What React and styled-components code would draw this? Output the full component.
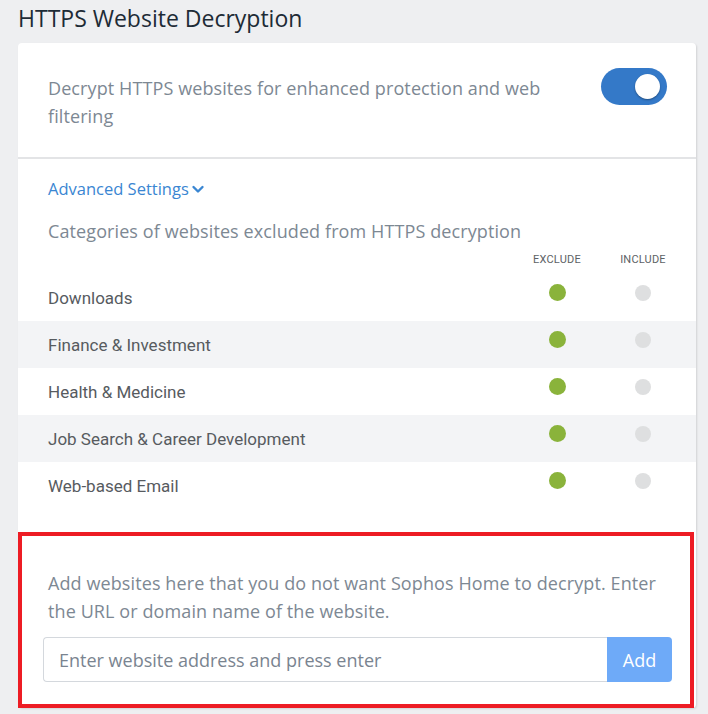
import React from 'react';
import styled, { createGlobalStyle } from 'styled-components';

const GlobalStyle = createGlobalStyle`
  body {
    margin: 0;
    background: #eeeff1;
    font-family: "Open Sans", "Noto Sans", sans-serif;
  }
`;

const Page = styled.div`
  padding: 4px 12px 0 18px;
  height: 714px;
  box-sizing: border-box;
  overflow: hidden;
`;

const Title = styled.h2`
  margin: 0 0 11px;
  font-size: 23px;
  line-height: 28px;
  font-weight: 400;
  color: #1d2b36;
`;

const Card = styled.div`
  background: #fff;
  border-radius: 4px;
  box-shadow: 1px 1px 2px rgba(0, 0, 0, 0.12);
`;

const ToggleSection = styled.div`
  display: flex;
  align-items: flex-start;
  justify-content: space-between;
  gap: 40px;
  height: 116px;
  box-sizing: border-box;
  padding: 31px 29px 0 30px;
  border-bottom: 2px solid #e3e4e6;
`;

const Lead = styled.p`
  margin: 0;
  font-size: 18px;
  letter-spacing: 0.1px;
  line-height: 28px;
  color: #7d8893;
`;

const Toggle = styled.div`
  flex: none;
  margin-top: -6px;
  width: 66px;
  height: 37px;
  border-radius: 19px;
  background: ${({ on }) => (on ? '#3479c8' : '#ccc')};
  display: flex;
  align-items: center;
  justify-content: ${({ on }) => (on ? 'flex-end' : 'flex-start')};
  padding: 0 7px;
  box-sizing: border-box;
`;

const Knob = styled.span`
  width: 25px;
  height: 25px;
  border-radius: 50%;
  background: #fff;
  box-shadow: 0 1px 2px rgba(0, 0, 0, 0.35);
`;

const Advanced = styled.div`
  padding: 19px 30px 0;
`;

const AdvancedLink = styled.a`
  display: inline-flex;
  align-items: center;
  gap: 2px;
  font-size: 16.5px;
  line-height: 22px;
  color: #3a86d2;
  text-decoration: none;
`;

const SubLead = styled(Lead)`
  margin-top: 20px;
  line-height: 22px;
`;

const Grid = styled.div`
  display: grid;
  grid-template-columns: 1fr 86px 86px;
  align-items: center;
  padding: 0 10px 0 30px;
  height: ${({ h }) => h}px;
  background: ${({ shaded }) => (shaded ? '#f3f4f6' : '#fff')};
`;

const Header = styled(Grid)`
  margin-top: 2px;
`;

const ColLabel = styled.span`
  font-family: "Roboto", sans-serif;
  font-size: 11px;
  letter-spacing: 0.2px;
  color: #5d6266;
  text-align: center;
`;

const RowLabel = styled.span`
  font-family: "Roboto", sans-serif;
  font-size: 17px;
  color: #575b5f;
`;

const Dot = styled.span`
  justify-self: center;
  width: ${({ on }) => (on ? 17 : 16)}px;
  height: ${({ on }) => (on ? 17 : 16)}px;
  margin-bottom: 10px;
  border-radius: 50%;
  background: ${({ on }) => (on ? '#8ab33b' : '#dedfe0')};
`;

const AddSection = styled.div`
  margin: 23px 2px 0 0;
  border: 4px solid #ed1c24;
  padding: 33px 18px 22px 21px;
`;

const AddText = styled(Lead)`
  padding-left: 5px;
  margin-bottom: 12px;
`;

const InputRow = styled.div`
  display: flex;
  height: 45px;
`;

const Input = styled.input`
  flex: 1;
  border: 1px solid #d4d8dd;
  border-right: none;
  border-radius: 4px 0 0 4px;
  padding: 0 15px;
  font-family: inherit;
  font-size: 18px;
  color: #333;
  outline: none;
  &::placeholder {
    color: #7a8490;
  }
`;

const AddButton = styled.button`
  width: 65px;
  border: none;
  border-radius: 0 4px 4px 0;
  background: #6eaaf8;
  color: #fff;
  font-family: inherit;
  font-size: 18px;
`;

const categories = [
  'Downloads',
  'Finance & Investment',
  'Health & Medicine',
  'Job Search & Career Development',
  'Web-based Email',
];

function Chevron() {
  return (
    <svg width="14" height="14" viewBox="0 0 14 14" fill="none">
      <path d="M2.5 5l4.5 4.5L11.5 5" stroke="#3a86d2" strokeWidth="2.4" strokeLinecap="round" strokeLinejoin="round" />
    </svg>
  );
}

export default function App() {
  return (
    <Page>
      <GlobalStyle />
      <Title>HTTPS Website Decryption</Title>
      <Card>
        <ToggleSection>
          <Lead>Decrypt HTTPS websites for enhanced protection and web filtering</Lead>
          <Toggle on>
            <Knob />
          </Toggle>
        </ToggleSection>
        <Advanced>
          <AdvancedLink href="#">
            Advanced Settings
            <Chevron />
          </AdvancedLink>
          <SubLead>Categories of websites excluded from HTTPS decryption</SubLead>
        </Advanced>
        <Header h={30}>
          <span />
          <ColLabel>EXCLUDE</ColLabel>
          <ColLabel>INCLUDE</ColLabel>
        </Header>
        {categories.map((c, i) => (
          <Grid key={c} h={47} shaded={i % 2 === 1}>
            <RowLabel>{c}</RowLabel>
            <Dot on />
            <Dot />
          </Grid>
        ))}
        <AddSection>
          <AddText>
            Add websites here that you do not want Sophos Home to decrypt. Enter the URL or domain name of the website.
          </AddText>
          <InputRow>
            <Input placeholder="Enter website address and press enter" />
            <AddButton>Add</AddButton>
          </InputRow>
        </AddSection>
      </Card>
    </Page>
  );
}
